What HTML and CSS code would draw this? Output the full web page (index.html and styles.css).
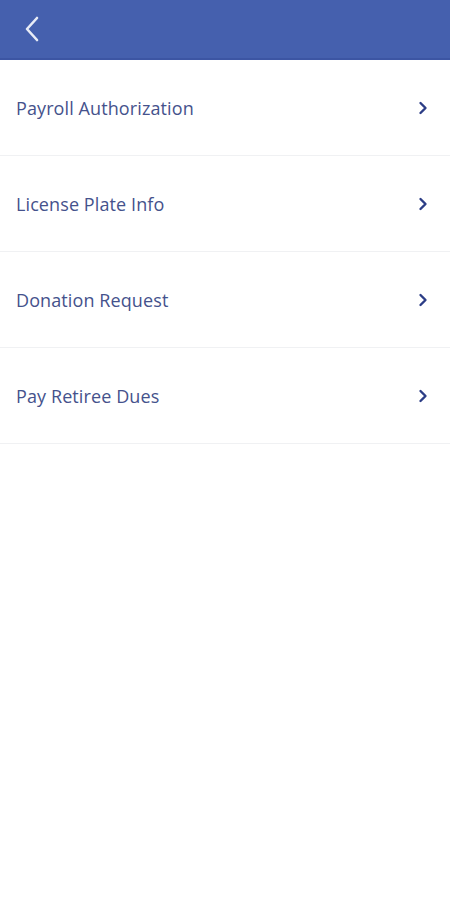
FILE: index.html
```html
<!DOCTYPE html>
<html>
<head>
<meta charset="utf-8">
<link rel="stylesheet" href="styles.css">
</head>
<body>
<header class="appbar">
  <svg class="back" width="20" height="28" viewBox="0 0 20 28"><path d="M15 3 L5 14 L15 25" fill="none" stroke="#e8ecf6" stroke-width="2.6" stroke-linecap="round" stroke-linejoin="round"/></svg>
</header>
<ul class="menu">
  <li class="item"><span class="label">Payroll Authorization</span><svg class="chev" width="12" height="16" viewBox="0 0 12 16"><path d="M3.5 3 L8.5 8 L3.5 13" fill="none" stroke="#2c3d86" stroke-width="2.4" stroke-linecap="round" stroke-linejoin="round"/></svg></li>
  <li class="item"><span class="label">License Plate Info</span><svg class="chev" width="12" height="16" viewBox="0 0 12 16"><path d="M3.5 3 L8.5 8 L3.5 13" fill="none" stroke="#2c3d86" stroke-width="2.4" stroke-linecap="round" stroke-linejoin="round"/></svg></li>
  <li class="item"><span class="label">Donation Request</span><svg class="chev" width="12" height="16" viewBox="0 0 12 16"><path d="M3.5 3 L8.5 8 L3.5 13" fill="none" stroke="#2c3d86" stroke-width="2.4" stroke-linecap="round" stroke-linejoin="round"/></svg></li>
  <li class="item"><span class="label">Pay Retiree Dues</span><svg class="chev" width="12" height="16" viewBox="0 0 12 16"><path d="M3.5 3 L8.5 8 L3.5 13" fill="none" stroke="#2c3d86" stroke-width="2.4" stroke-linecap="round" stroke-linejoin="round"/></svg></li>
</ul>
</body>
</html>
```
FILE: styles.css
```css
html, body {
  margin: 0;
  padding: 0;
  background: #ffffff;
  font-family: "Open Sans", "Noto Sans", sans-serif;
}
.appbar {
  height: 58px;
  background: #4560ae;
  border-bottom: 2px solid #3c55a3;
  display: flex;
  align-items: center;
  padding-left: 22px;
}
.back {
  display: block;
}
.menu {
  list-style: none;
  margin: 0;
  padding: 0;
}
.item {
  height: 94px;
  border-bottom: 1px solid #f0f1f3;
  display: flex;
  align-items: center;
  justify-content: space-between;
  padding: 1px 21px 0 16px;
}
.label {
  font-size: 18px;
  color: #45528c;
  letter-spacing: 0.1px;
}
.chev {
  display: block;
}
```
